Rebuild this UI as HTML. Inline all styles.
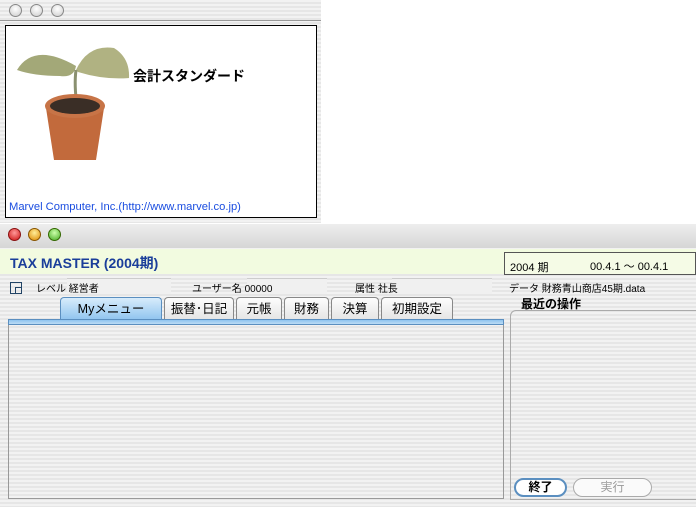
<!DOCTYPE html>
<html><head><meta charset="utf-8"><style>
*{margin:0;padding:0;box-sizing:border-box}
body{width:696px;height:507px;background:#fff;position:relative;overflow:hidden;font-family:"Liberation Sans","Noto Sans CJK JP",sans-serif;}
.abs{position:absolute}
.stripe{background:repeating-linear-gradient(#f2f2f2 0 2px,#e6e6e6 2px 4px)}
.btn{position:absolute;width:13px;height:13px;border-radius:50%;border:1px solid #888;background:radial-gradient(circle at 50% 35%,#fff,#ccc)}
.t{font-size:11px;position:absolute;color:#000;white-space:nowrap}
.tab{position:absolute;top:297px;height:23px;border:1px solid #888;border-bottom:none;border-radius:4px 4px 0 0;background:linear-gradient(#fdfdfd,#e4e4e4);font-size:12.5px;text-align:center;line-height:22px}
.fld{position:absolute;top:278px;height:16px;background:#f0f0f0;border-top:1px solid #ccc}
</style></head><body>
<div class="abs stripe" style="left:0;top:0;width:321px;height:223px;"></div>
<div class="btn" style="left:9px;top:4px"></div>
<div class="btn" style="left:30px;top:4px"></div>
<div class="btn" style="left:51px;top:4px"></div>
<div class="abs" style="left:0;top:20px;width:321px;height:1px;background:#999"></div>
<div class="abs" style="left:5px;top:25px;width:312px;height:193px;background:#fff;border:1px solid #000"></div>
<svg class="abs" style="left:14px;top:40px" width="118" height="124">
<path d="M3 30 Q20 2 62 26 Q60 38 46 36 Q20 36 3 30Z" fill="#a3a878"/>
<path d="M62 30 Q74 4 100 8 Q116 18 115 38 Q90 40 64 32Z" fill="#b0b282"/>
<path d="M62 30 Q60 45 63 66" stroke="#8a9070" stroke-width="3" fill="none"/>
<path d="M32 68 L90 68 L82 120 L40 120Z" fill="#c26a3c"/>
<ellipse cx="61" cy="66" rx="30" ry="12" fill="#c77447"/>
<ellipse cx="61" cy="66" rx="25" ry="8" fill="#3a2e26"/>
</svg>
<div class="t" style="left:133px;top:66px;font-size:14px;font-weight:bold">会計スタンダード</div>
<div class="t" style="left:9px;top:201px;color:#1a4de0;font-size:11.2px">Marvel Computer, Inc.(http://www.marvel.co.jp)</div>
<div class="abs stripe" style="left:0;top:224px;width:696px;height:283px;"></div>
<div class="abs" style="left:0;top:224px;width:696px;height:24px;background:linear-gradient(#eee,#d6d6d6)"></div>
<div class="btn" style="left:8px;top:228px;background:radial-gradient(circle at 50% 35%,#f99,#c11);border-color:#811"></div>
<div class="btn" style="left:28px;top:228px;background:radial-gradient(circle at 50% 35%,#fe9,#d80);border-color:#850"></div>
<div class="btn" style="left:48px;top:228px;background:radial-gradient(circle at 50% 35%,#cfa,#4a2);border-color:#360"></div>
<div class="abs" style="left:0;top:249px;width:696px;height:25px;background:#f2fbe0"></div>
<div class="t" style="left:10px;top:253px;font-size:14px;font-weight:bold;color:#1a3e9a">TAX MASTER (2004期)</div>
<div class="abs" style="left:504px;top:252px;width:192px;height:23px;border:1px solid #555;background:#f5fbe6"></div>
<div class="t" style="left:510px;top:259px">2004 期</div>
<div class="t" style="left:590px;top:258px">00.4.1 ～ 00.4.1</div>
<div class="fld" style="left:67px;width:104px"></div>
<div class="fld" style="left:247px;width:80px"></div>
<div class="fld" style="left:392px;width:100px"></div>
<div class="abs" style="left:10px;top:282px;width:12px;height:12px;border:1px solid #246"></div>
<div class="abs" style="left:15px;top:287px;width:7px;height:7px;border-left:1px solid #246;border-top:1px solid #246"></div>
<div class="t" style="left:36px;top:280px;font-size:10px">レベル 経営者</div>
<div class="t" style="left:192px;top:280px;font-size:10px">ユーザー名 00000</div>
<div class="t" style="left:355px;top:280px;font-size:10px">属性 社長</div>
<div class="t" style="left:509px;top:280px;font-size:10px">データ 財務青山商店45期.data</div>
<div class="tab" style="left:60px;width:102px;background:linear-gradient(#d8ecfb,#8fc4ef);border-color:#5b8fc0">Myメニュー</div>
<div class="tab" style="left:164px;width:70px">振替･日記</div>
<div class="tab" style="left:236px;width:46px">元帳</div>
<div class="tab" style="left:284px;width:45px">財務</div>
<div class="tab" style="left:331px;width:48px">決算</div>
<div class="tab" style="left:381px;width:72px">初期設定</div>
<div class="abs" style="left:8px;top:319px;width:496px;height:6px;background:linear-gradient(#8fc4ef,#bcdcf5);border:1px solid #5b8fc0"></div>
<div class="abs" style="left:8px;top:325px;width:496px;height:174px;border:1px solid #999;border-top:none"></div>
<div class="t" style="left:521px;top:295px;font-size:12px;font-weight:bold">最近の操作</div>
<div class="abs" style="left:510px;top:310px;width:186px;height:190px;border:1px solid #aaa;border-right:none;border-radius:6px 0 0 0"></div>
<div class="abs" style="left:514px;top:478px;width:53px;height:19px;border:2px solid #5b8fc0;border-radius:10px;background:#fff;font-size:12px;font-weight:bold;text-align:center;line-height:15px">終了</div>
<div class="abs" style="left:573px;top:478px;width:79px;height:19px;border:1px solid #aaa;border-radius:10px;background:#fafafa;font-size:12px;color:#999;text-align:center;line-height:17px">実行</div>
</body></html>
